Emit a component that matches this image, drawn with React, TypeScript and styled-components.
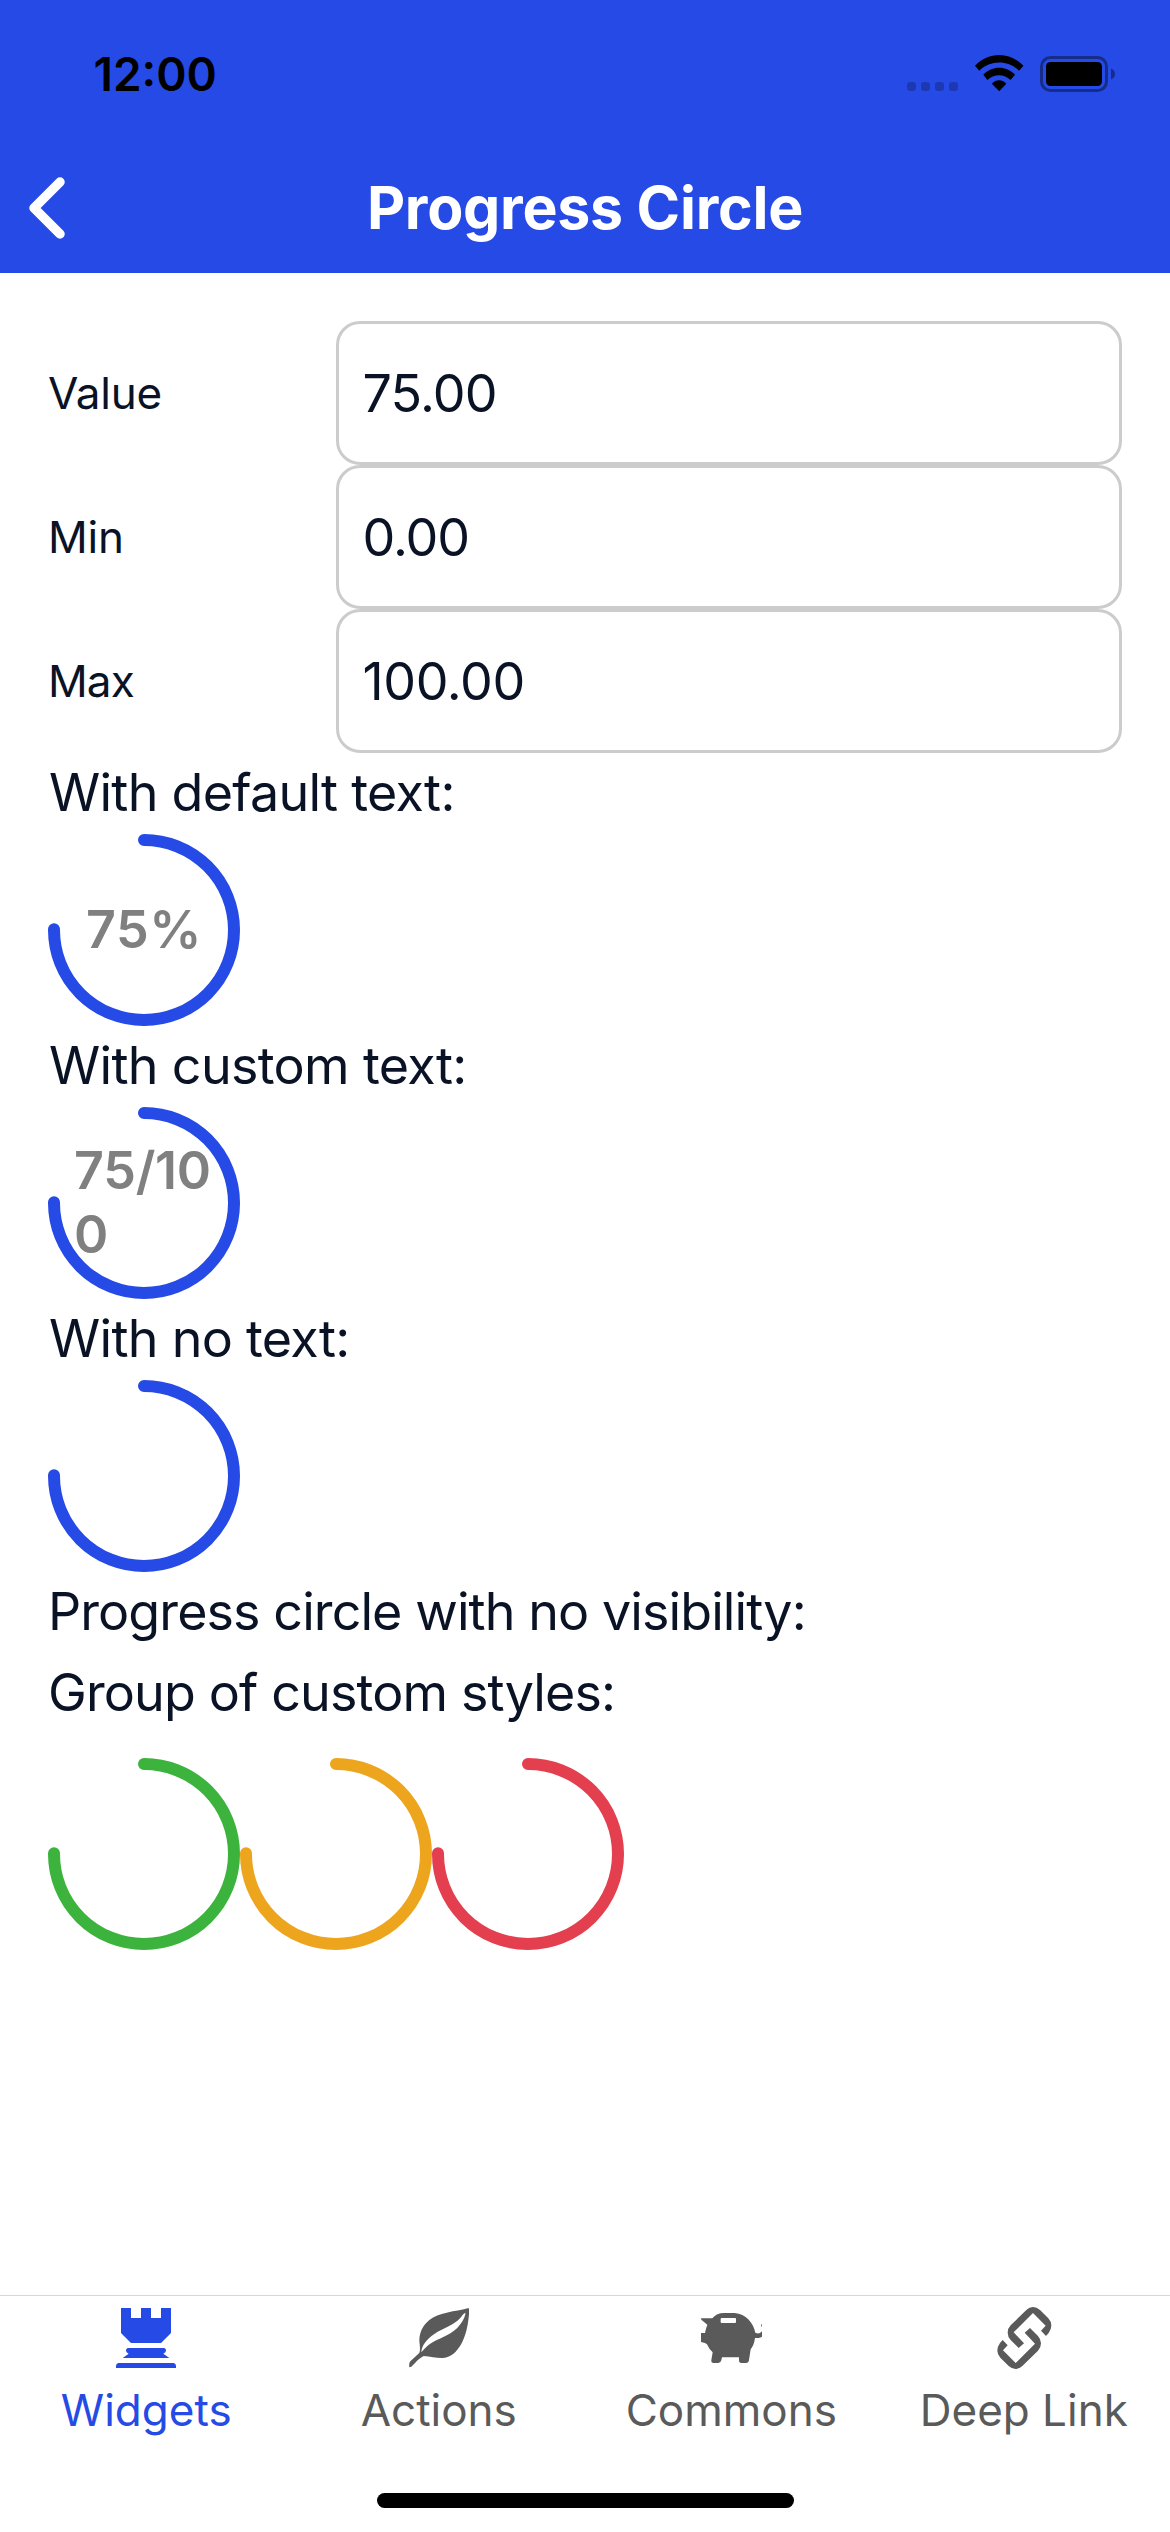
import React from "react";
import styled, { createGlobalStyle } from "styled-components";

const palette = {
  brand: "#264ae5",
  text: "#0a1325",
  border: "#cccccc",
  muted: "#808080",
  tab: "#5a5a5a",
  success: "#3cb33d",
  warning: "#eca51c",
  danger: "#e33f4e",
};

const GlobalStyle = createGlobalStyle`
  * { box-sizing: border-box; }
  body { margin: 0; background: #ffffff; }
`;

const Screen = styled.div`
  display: flex;
  flex-direction: column;
  width: 1170px;
  height: 2532px;
  overflow: hidden;
  background: #ffffff;
  color: ${palette.text};
  font-family: Inter, "Liberation Sans", sans-serif;
`;

const Header = styled.header`
  display: flex;
  flex-direction: column;
  height: 273px;
  background: ${palette.brand};
`;

const StatusBar = styled.div`
  display: flex;
  align-items: center;
  justify-content: space-between;
  height: 148px;
  padding: 0 54px 0 93.5px;
`;

const Clock = styled.span`
  font-size: 46px;
  font-weight: 600;
  line-height: 56px;
  color: #000000;
`;

const StatusIcons = styled.div`
  display: flex;
  align-items: center;
  gap: 17px;

  svg {
    display: block;
    overflow: visible;
  }
`;

const NavBar = styled.nav`
  display: grid;
  grid-template-columns: 100px 1fr 100px;
  align-items: center;
  height: 125px;
  padding-bottom: 5px;
`;

const BackButton = styled.button`
  display: flex;
  padding: 0 0 0 29px;
  border: 0;
  background: none;
  color: #ffffff;
`;

const Title = styled.h1`
  margin: 0;
  font-size: 59px;
  font-weight: 700;
  line-height: 72px;
  letter-spacing: -0.26px;
  text-align: center;
  color: #ffffff;
`;

const Content = styled.main`
  display: flex;
  flex-direction: column;
  flex: 1;
  padding: 48px;
`;

const FieldRow = styled.label`
  display: grid;
  grid-template-columns: 287.5px 1fr;
  align-items: center;
  height: 144px;
`;

const FieldLabel = styled.span<{ $tracking: number }>`
  font-size: 44px;
  letter-spacing: ${(p) => p.$tracking}px;
`;

const FieldBox = styled.span<{ $tracking: number }>`
  display: flex;
  align-items: center;
  height: 144px;
  padding: 0 24px;
  border: 3px solid ${palette.border};
  border-radius: 24px;
  font-size: 52px;
  letter-spacing: ${(p) => p.$tracking}px;
`;

const Caption = styled.p<{ $tracking: number; $inset?: number }>`
  height: 81px;
  margin: 0;
  padding-left: ${(p) => p.$inset ?? 0}px;
  font-size: 52px;
  line-height: 79px;
  letter-spacing: ${(p) => p.$tracking}px;
  white-space: nowrap;
`;

const Circle = styled.div`
  display: grid;
  place-items: center;
  width: 192px;
  height: 192px;

  > * {
    grid-area: 1 / 1;
  }
`;

const CircleText = styled.span<{ $tracking: number }>`
  max-width: 140px;
  font-size: 52px;
  font-weight: 600;
  line-height: 64px;
  letter-spacing: ${(p) => p.$tracking}px;
  word-break: break-all;
  color: ${palette.muted};
`;

const CircleGroup = styled.div`
  display: flex;
  padding-top: 24px;
`;

const TabBar = styled.footer`
  display: flex;
  flex-direction: column;
  height: 237px;
  border-top: 1px solid #d8d8d8;
`;

const Tabs = styled.div`
  display: grid;
  grid-template-columns: repeat(4, 1fr);
`;

const Tab = styled.div<{ $active?: boolean }>`
  display: flex;
  flex-direction: column;
  align-items: center;
  gap: 15px;
  padding-top: 12px;
  color: ${(p) => (p.$active ? palette.brand : palette.tab)};

  svg {
    display: block;
  }
`;

const TabLabel = styled.span`
  font-size: 44px;
  line-height: 54px;
`;

const HomeIndicator = styled.div`
  width: 417px;
  height: 15px;
  margin: auto auto 24px;
  border-radius: 8px;
  background: #000000;
`;

const RADIUS = 90;

function ProgressCircle({
  value,
  min = 0,
  max = 100,
  color = palette.brand,
  text,
  tracking = 0,
}: {
  value: number;
  min?: number;
  max?: number;
  color?: string;
  text?: string;
  tracking?: number;
}) {
  const length = 2 * Math.PI * RADIUS;
  const filled = ((value - min) / (max - min)) * length;
  return (
    <Circle>
      <svg width="192" height="192" viewBox="0 0 192 192">
        <circle
          cx="96"
          cy="96"
          r={RADIUS}
          fill="none"
          stroke={color}
          strokeWidth="12"
          strokeLinecap="round"
          strokeDasharray={`${filled} ${length}`}
          transform="rotate(-90 96 96)"
        />
      </svg>
      {text && <CircleText $tracking={tracking}>{text}</CircleText>}
    </Circle>
  );
}

function Signal() {
  return (
    <svg width="51" height="36" viewBox="0 0 51 36">
      {[0, 14, 28, 42].map((x) => (
        <rect key={x} x={x} y="26" width="9" height="9" rx="3" fill="#000000" fillOpacity="0.22" />
      ))}
    </svg>
  );
}

function Wifi() {
  return (
    <svg width="48" height="36" viewBox="0 0 48 36">
      <path d="M0 9.8C13.5-4.6 35-4.6 48.5 9.8L44 14.7C33 3.8 15.3 3.8 4.3 14.7Z" />
      <path d="M8.3 18.7C17 9.4 31.3 9.4 40 18.7L35.5 24C29.3 17.7 18.7 17.7 12.4 24Z" />
      <path d="M16.9 27.7C21 23.2 27.3 23.2 31.3 27.7L24.2 35.3Z" />
    </svg>
  );
}

function Battery() {
  return (
    <svg width="76" height="36" viewBox="0 0 76 36">
      <rect
        x="1.5"
        y="1.5"
        width="65"
        height="33"
        rx="9"
        fill="none"
        stroke="#000000"
        strokeOpacity="0.4"
        strokeWidth="3"
      />
      <rect x="6" y="6" width="56" height="24" rx="4.5" />
      <path d="M71 12.5C76.3 14.5 76.3 21.5 71 23.5Z" fillOpacity="0.4" />
    </svg>
  );
}

function TowerIcon() {
  return (
    <svg width="60" height="60" viewBox="168 84 180 180" fill="currentColor">
      <path d="M183 84h30v30h30V84h30v30h30V84h30v75l-30 30h-90l-30-30z" />
      <path d="M205 204h106q7 0 7 8 0 5-8 9l18 13H188l18-13q-8-4-8-9 0-8 7-8z" />
      <path d="M175 249h166q7 2 7 9v6H168v-6q0-7 7-9z" />
    </svg>
  );
}

function LeafIcon() {
  return (
    <svg width="60" height="60" viewBox="206 84 180 180" fill="currentColor">
      <path
        fillRule="evenodd"
        d="M382 85C345 95 297 97 268 119C243 139 234 166 238 193C239 204 240 215 236 220L210 244C207 248 206 254 207 262L213 260C222 252 236 234 250 228C272 230 290 235 308 234C334 231 348 216 361 195C379 165 385 125 387 88Q387 84 382 85ZM375 98C366 103 366 108 359 115C340 136 309 144 282 162C258 178 244 197 243 217C257 202 260 196 282 184C306 172 331 163 350 145C363 132 372 116 375 103Z"
      />
    </svg>
  );
}

function PiggyIcon() {
  return (
    <svg width="61" height="60" viewBox="303 84 183 180" fill="currentColor">
      <path
        fillRule="evenodd"
        d="M303 115H337C346 104 357 99 372 99H404C437 101 461 130 466 158C475 163 482 159 486 154V170C480 174 473 174 465 174C463 190 458 200 452 208L447 240Q446 249 438 249H424Q417 249 417 241V232H366L364 241Q362 249 355 249H341Q333 249 334 241L338 217Q328 209 321 193L315 189L303 186V159H315Q317 147 322 134L304 119ZM365 114Q362 114 362 117V126Q362 129 365 129H405Q408 129 408 126V117Q408 114 405 114Z"
      />
      <path d="M486 131V142L483 136Z" />
    </svg>
  );
}

const LINK_HALF =
  "M437 168L422 152L436 137L398 99L340 157L371 190L355 204L331 180Q322 170 322 158Q322 145 331 136L378 90Q387 81 398 81Q409 81 419 90L444 115Q453 125 453 136Q453 148 445 159Z";

function LinkIcon() {
  return (
    <svg width="60" height="64" viewBox="281 78 180 192" fill="currentColor">
      <path d={LINK_HALF} />
      <path d={LINK_HALF} transform="rotate(180 372 174)" />
    </svg>
  );
}

const LinkSlot = styled.span`
  margin: -2px 0;
`;

const fields = [
  { label: "Value", value: "75.00", labelTracking: -0.25, valueTracking: -0.82 },
  { label: "Min", value: "0.00", labelTracking: -0.2, valueTracking: -1.1 },
  { label: "Max", value: "100.00", labelTracking: -0.9, valueTracking: -0.4 },
];

const groupColors = [palette.success, palette.warning, palette.danger];

export default function App() {
  return (
    <Screen>
      <GlobalStyle />
      <Header>
        <StatusBar>
          <Clock>12:00</Clock>
          <StatusIcons>
            <Signal />
            <Wifi />
            <Battery />
          </StatusIcons>
        </StatusBar>
        <NavBar>
          <BackButton aria-label="Back">
            <svg width="36" height="62" viewBox="0 0 36 62">
              <path
                d="M31 5L5 31L31 57"
                fill="none"
                stroke="currentColor"
                strokeWidth="9.5"
                strokeLinecap="round"
                strokeLinejoin="round"
              />
            </svg>
          </BackButton>
          <Title>Progress Circle</Title>
        </NavBar>
      </Header>

      <Content>
        {fields.map((f) => (
          <FieldRow key={f.label}>
            <FieldLabel $tracking={f.labelTracking}>{f.label}</FieldLabel>
            <FieldBox $tracking={f.valueTracking}>{f.value}</FieldBox>
          </FieldRow>
        ))}

        <Caption $tracking={-0.73} $inset={1}>With default text:</Caption>
        <ProgressCircle value={75} text="75%" tracking={0.5} />

        <Caption $tracking={-0.67} $inset={1}>With custom text:</Caption>
        <ProgressCircle value={75} text="75/100" tracking={-0.25} />

        <Caption $tracking={-0.71} $inset={1}>With no text:</Caption>
        <ProgressCircle value={75} />

        <Caption $tracking={-0.91}>Progress circle with no visibility:</Caption>
        <Caption $tracking={-0.86}>Group of custom styles:</Caption>
        <CircleGroup>
          {groupColors.map((color) => (
            <ProgressCircle key={color} value={75} color={color} />
          ))}
        </CircleGroup>
      </Content>

      <TabBar>
        <Tabs>
          <Tab $active>
            <TowerIcon />
            <TabLabel>Widgets</TabLabel>
          </Tab>
          <Tab>
            <LeafIcon />
            <TabLabel>Actions</TabLabel>
          </Tab>
          <Tab>
            <PiggyIcon />
            <TabLabel>Commons</TabLabel>
          </Tab>
          <Tab>
            <LinkSlot>
              <LinkIcon />
            </LinkSlot>
            <TabLabel>Deep Link</TabLabel>
          </Tab>
        </Tabs>
        <HomeIndicator />
      </TabBar>
    </Screen>
  );
}
